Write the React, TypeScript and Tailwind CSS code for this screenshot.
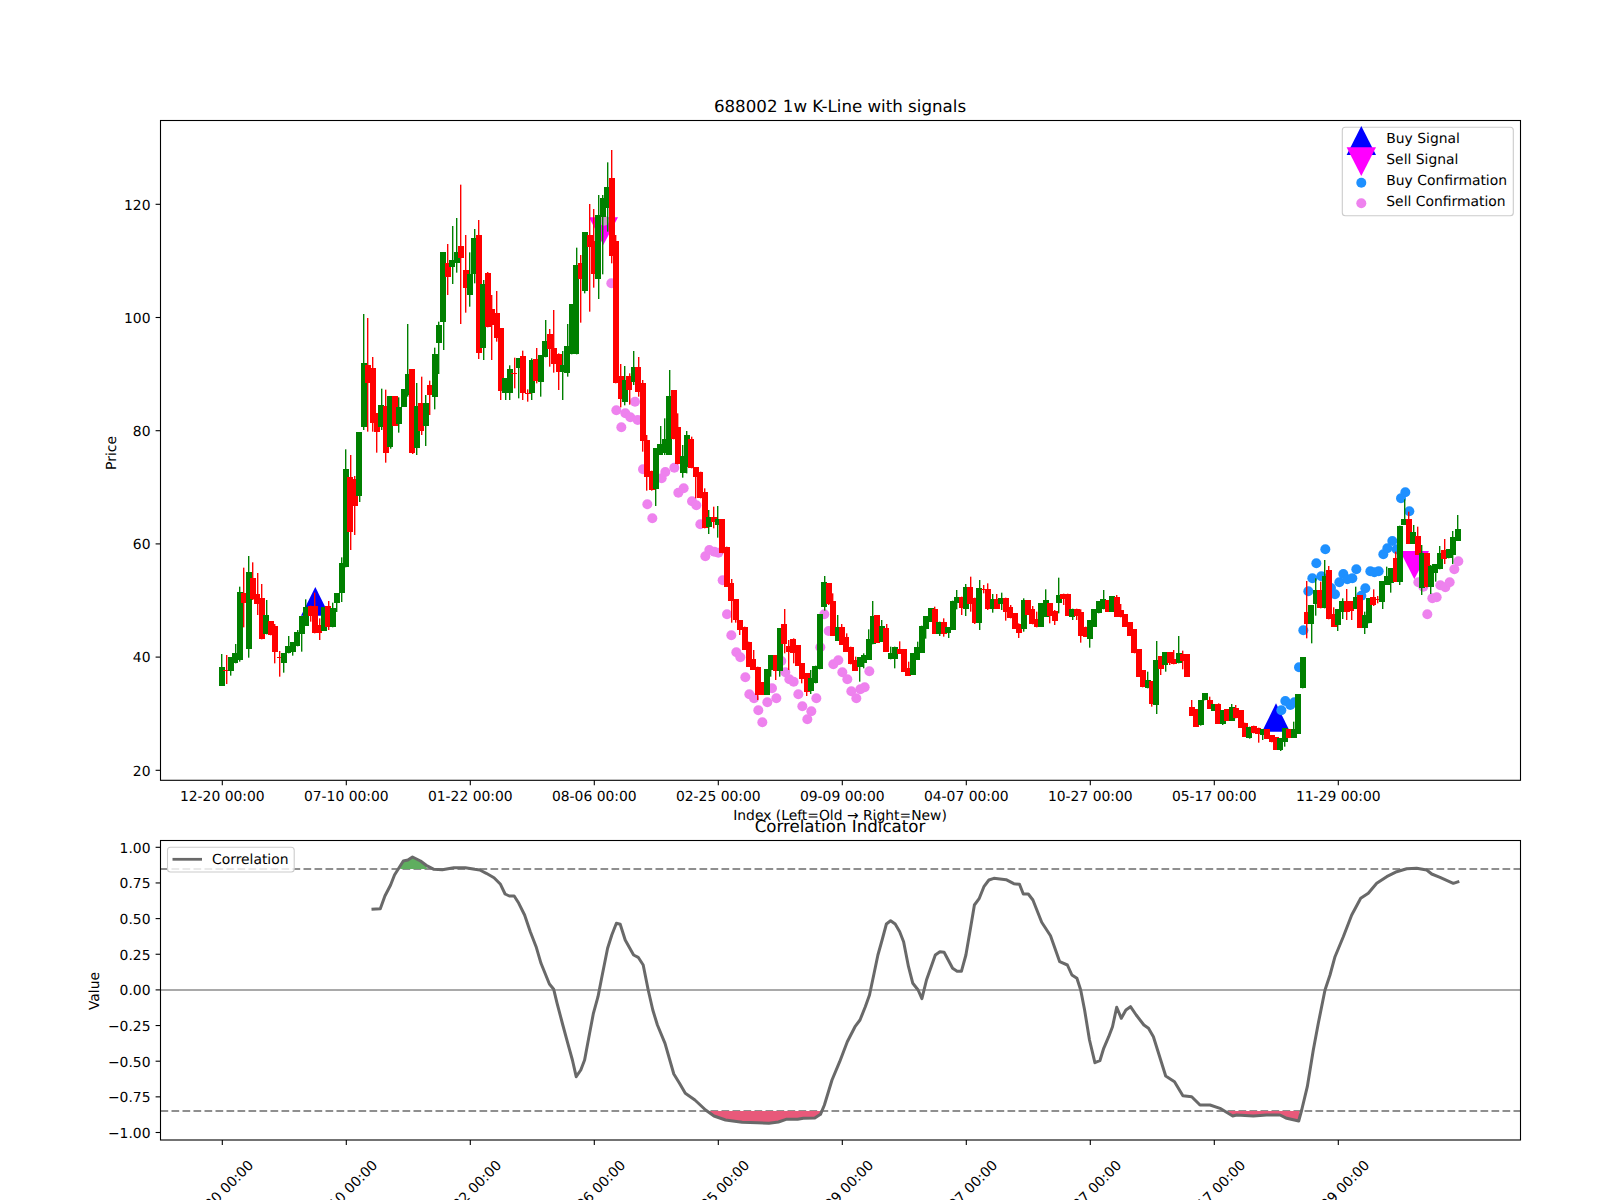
import React from "react";

type C = { g: boolean; t: number; b: number; wt: number; wb: number };
const seg = (y0: number, s: string): C[] => {
  const k = s.trim().split(/\s+/);
  const o: C[] = [];
  for (let i = 0; i + 4 < k.length; i += 5) {
    o.push({ g: k[i] === "G", t: y0 + +k[i + 1] / 3, b: y0 + +k[i + 2] / 3, wt: y0 + +k[i + 3] / 3, wb: y0 + +k[i + 4] / 3 });
  }
  return o;
};

const candles: C[] = [
  ...seg(400, `
G 802 857 762 857  R 810 813 765 852  G 772 812 772 827  G 760 790 732 790  G 577 780 560 785
R 580 608 503 682  G 517 748 468 773  R 535 598 487 600  R 583 612 519 645  R 595 718 552 718
G 646 703 600 703  R 663 706 663 706  R 679 756 672 790  R 770 773 753 830  G 760 790 760 818
G 739 760 708 760  G 727 757 727 767  G 697 739 690 739  G 649 703 649 755  G 622 677 598 677
R 617 647 617 665  R 617 700 578 700  R 676 700 655 720  G 622 692 622 692  R 618 682 603 690
G 625 682 608 682  G 580 608 580 636  G 490 578 472 606  G 208 502 148 502  R 232 395 165 450
R 237 317 228 405  G 97 287 97 306`),
  ...seg(100, `
G 790 981 642 990  R 796 848 654 995  R 805 970 771 995  R 940 995 940 1058  G 915 982 866 990
R 918 1060 869 1088  G 888 1040 888 1046  R 888 978 888 978  G 922 973 892 998  G 868 920 868 920
G 823 885 672 890  R 808 1058 808 1062  G 918 1045 849 1065  R 908 992 830 1005  G 908 977 885 1038
R 855 885 842 945  G 763 890 743 928  G 676 730 665 822  G 457 665 457 750  R 490 532 432 585
G 481 500 378 552  G 457 488 354 518  R 438 475 254 672  R 511 563 405 638  G 523 586 457 620
G 414 523 387 550  R 406 760 360 777  G 553 743 540 780  R 520 682 516 682  R 628 675 585 780
R 640 715 573 725  R 685 872 685 900  G 835 880 835 900  G 808 880 796 900  R 820 822 773 865
G 775 803 775 895  R 769 880 752 900  R 880 882 868 905  G 781 880 775 900  R 778 842 744 850`),
  ...seg(130, `
G 675 755 675 800  G 633 682 570 682  R 612 658 597 710  R 655 702 540 728  R 672 725 670 780
G 706 727 663 810  G 648 730 582 740  G 522 673 522 673  G 405 673 353 673  R 400 448 375 578
G 307 482 307 490  R 316 352 222 545  R 333 433 237 473  G 256 446 195 507  G 205 262 195 433
G 172 233 97 305  R 145 377 60 400  R 333 758 315 760  R 737 808 702 832  G 750 815 708 826
R 738 780 730 824  G 712 755 663 765  R 712 787 681 800`),
  ...seg(400, `
R -50 123 -60 155  R 120 230 105 272  R 212 270 212 272  G 145 268 145 318  G 133 165 78 165
G 118 160 55 165  G -12 165 -90 165  R -30 118 -30 118  R 82 193 40 193  G 167 218 135 233
G 105 200 93 220  R 118 205 110 205  R 202 232 202 295  R 217 295 215 295  R 275 385 265 385
G 352 382 330 402  R 352 365 320 385  G 358 375 318 413  R 358 458 358 460  R 440 560 440 560
R 548 603 537 668  R 597 660 597 668  R 660 690 660 705  R 680 750 680 750  R 725 800 725 800
R 778 810 750 810  R 800 885 800 900  R 847 885 847 885  G 808 885 808 885  G 766 810 785 830
R 766 812 766 840  G 685 812 685 830  R 673 733 627 760  R 738 755 720 810  R 717 758 715 790
R 735 798 735 798  R 790 838 790 850  R 820 875 820 888  G 835 873 810 882  G 797 850 797 850
G 643 808 643 808  G 545 620 528 632  R 550 612 550 615  R 602 708 580 708  G 682 722 645 722
R 682 735 672 735  R 710 755 700 755  R 742 793 740 793  R 780 812 770 812  G 772 800 772 845
G 764 790 760 805  G 716 780 688 780  G 649 733 603 733  R 646 728 646 728  G 677 725 660 725
R 685 755 672 755  G 760 778 740 778  G 740 778 740 805  R 746 762 724 762  R 748 815 748 815
R 803 827 785 827  G 760 825 760 825  G 740 780 725 780  G 677 758 677 758  G 649 688 649 716`),
  ...seg(530, `
G 235 275 235 275  R 237 311 230 311  G 275 312 275 318  R 277 313 265 320  G 292 310 292 324
G 212 300 212 300  G 202 220 180 238  R 202 235 200 255  G 170 238 162 258  R 170 223 140 245
R 203 278 203 282  G 175 280 150 300  R 176 180 165 190  R 178 238 160 240  G 208 238 192 248
R 208 237 192 237  G 205 222 188 240  R 203 247 203 272  R 232 265 225 265  R 250 297 250 297
R 282 310 280 324  G 211 296 205 305  R 211 255 211 255  R 238 283 228 283  R 268 290 245 292
G 220 290 220 290  G 211 260 178 260  R 220 257 220 280  R 243 272 240 285  G 196 218 143 250
R 191 208 191 225  R 191 257 191 257  G 236 260 236 270  R 236 258 236 270  R 245 318 238 338
R 290 320 290 320  G 271 328 271 353  G 238 290 238 290  G 214 250 214 250  G 208 238 180 238
R 210 245 210 245  G 199 245 199 245  R 201 260 195 260  R 240 262 222 262  R 253 290 253 290
R 276 318 276 318  R 298 370 298 370  R 358 440 358 440  R 421 472 421 472  G 450 475 425 475
R 453 522 453 530  G 391 524 333 552  R 379 417 379 435  G 367 406 367 425  R 367 400 367 405
R 386 403 360 403  G 370 400 318 400  R 373 393 362 418  R 373 440 373 440  R 531 558 510 558
R 538 590 538 590  G 511 585 511 587  G 490 511 490 511  R 511 536 500 536  G 523 542 523 542
R 523 581 520 581  G 541 581 541 585  R 538 572 538 572  G 530 572 522 572  R 535 565 525 565
R 541 594 541 594  R 578 621 578 621  G 590 623 590 626  R 587 610 587 610  R 593 612 593 638
G 598 616 598 630  R 598 627 598 627  R 616 637 616 637  R 622 660 622 660  G 625 660 625 663
G 594 637 594 650  R 597 623 597 623  G 598 623 575 623  G 493 612 493 612  G 382 475 382 475`),
  ...seg(470, `
R 427 462 333 505  G 405 462 405 520  G 360 402 325 437  R 360 415 335 415  G 318 415 270 415
R 300 448 288 448  R 432 470 412 470  G 418 465 418 483  G 393 425 385 447  R 393 425 357 450
R 393 422 393 450  G 380 417 350 417  R 376 473 376 473  G 436 475 425 492  G 385 460 385 460
R 380 405 358 408  R 388 390 378 400  G 334 395 334 417  G 318 345 290 345  G 295 338 295 368
R 265 335 245 335  G 167 335 167 345  G 148 165 88 165  R 148 222 125 222  G 187 222 165 222
R 198 255 170 255  G 250 353 225 375  R 250 352 250 352  G 288 352 285 372  G 283 308 283 335
G 248 298 228 298  R 240 268 207 282  G 238 265 238 265  G 200 255 183 282  G 176 212 135 212`),
];

const xi = (i: number) => 222 + 4.4286 * i;

const pts = (ox: number, oy: number, sx: number, s: string): [number, number][] =>
  s.trim().split(/\s+/).map((p) => {
    const [a, b] = p.split(",").map(Number);
    return [ox + a / sx, oy + b / 3] as [number, number];
  });

const pink = [
  ...pts(540, 130, 3, "214,460"),
  ...pts(600, 400, 3, `49,31 64,82 76,40 91,52 105,5 113,60 129,208 142,313 157,355 185,235 196,216 223,203 235,278 251,265 276,304 289,316 301,373 316,469 328,450 343,455 355,458 368,541 381,643 394,706 409,757 421,772 436,832 448,883 462,895 475,931 487,967 502,907 516,865 529,895 544,783 556,817 568,838 581,845 595,883 607,919 622,958 634,934 649,895 661,742 673,643 686,693 700,793 715,781 727,817 742,838 754,874 769,895 781,868 794,862 808,814`),
  ...pts(1230, 470, 3, "565,337 580,350 592,433 607,385 620,382 631,346 646,352 659,337 673,298 685,274"),
];
const blue = pts(1230, 470, 3, `220,481 207,592 154,721 166,693 181,705 193,697 235,364 247,325 259,280 274,319 286,238 303,354 315,373 328,337 340,312 352,328 367,325 379,298 394,377 406,355 421,304 433,307 446,304 460,253 472,235 487,213 500,238 513,85 526,67 538,124`);

const line: [number, number][] = [
  ...pts(140, 780, 2.6133, `605,388 628,386 640,348 655,315 665,285 688,243 700,240 712,231 733,243 748,256 768,268 790,269 820,263 850,263 875,268 888,270 905,280 925,293 942,313 954,342 965,348 978,348 990,370 1005,405 1020,455 1035,500 1048,550 1070,612 1081,628 1090,670 1105,735 1118,790 1130,840 1140,890 1152,870 1162,840 1175,760 1185,700 1197,650 1207,590 1222,505 1233,465 1245,430 1255,433 1268,480 1290,525 1302,532 1315,555 1328,630 1340,690 1352,735 1372,790 1395,882 1410,910 1425,940 1450,960 1478,990 1500,1008 1530,1020`),
  ...pts(700, 780, 2.6133, `110,1027 150,1028 180,1030 205,1026 225,1018 255,1018 270,1015 300,1014 315,1003 325,975 345,900 365,845 385,785 405,740 418,720 432,680 443,645 455,580 465,525 476,480 487,432 498,422 510,432 522,455 532,485 545,560 556,610 570,630 580,656 592,600 615,525 627,515 638,517 660,565 672,574 683,574 695,525 707,445 717,375 730,355 742,320 755,300 768,295 800,299 820,311 835,313 845,342 858,342 870,360 893,427 916,467 940,545 960,555 972,585 985,595 995,630 1005,690 1018,780 1032,848 1045,842 1055,805 1068,770 1078,740 1089,682 1101,715 1113,690 1125,680 1140,705 1160,735 1172,745 1185,770 1217,888 1240,905 1262,947 1285,950`),
  ...pts(1200, 800, 3, `0,915 30,915 60,925 98,948 110,945 160,948 200,945 240,945 260,955 296,963 305,930 322,860 340,750 355,670 375,570 390,525 405,470 430,410 455,345 482,295 505,280 530,250 560,230 590,215 620,206 650,205 680,210 695,222 720,232 760,250 778,244`),
];
const lineD = line.map((p, i) => `${i ? "L" : "M"}${p[0].toFixed(1)} ${p[1].toFixed(1)}`).join(" ");

const between = (a: number, b: number, y: number, extra: [number, number]) => {
  const inner = line.filter((p) => p[0] > a && p[0] < b);
  return [[a, y], ...inner, extra, [extra[0], y]].map((p) => p.join(",")).join(" ");
};

const dates = ["12-20 00:00", "07-10 00:00", "01-22 00:00", "08-06 00:00", "02-25 00:00", "09-09 00:00", "04-07 00:00", "10-27 00:00", "05-17 00:00", "11-29 00:00"];
const ticks = dates.map((_, i) => 222.3 + 124 * i);
const priceTicks = [120, 100, 80, 60, 40, 20];
const corrTicks = ["1.00", "0.75", "0.50", "0.25", "0.00", "−0.25", "−0.50", "−0.75", "−1.00"];

export default function App() {
  return (
    <div className="w-[1600px] h-[1200px] bg-white overflow-hidden">
      <svg width={1600} height={1200} viewBox="0 0 1600 1200" textRendering="geometricPrecision" className="block font-['DejaVu_Sans',sans-serif] text-[13.89px]" fill="#000">
        <text x={840} y={112} textAnchor="middle" className="text-[16.67px]">688002 1w K-Line with signals</text>

        {/* price panel marks */}
        <polygon points="315.3,587 301,615.7 329.6,615.7" fill="#0000ff" />
        <polygon points="603.3,245 589,217.3 618,217.3" fill="#ff00ff" />
        <polygon points="1276,703.3 1262,731.7 1290,731.7" fill="#0000ff" />
        <polygon points="1414.3,579.3 1400,551 1429,551" fill="#ff00ff" />
        {pink.map((p, i) => <circle key={i} cx={p[0]} cy={p[1]} r={5} fill="#ee82ee" />)}
        {blue.map((p, i) => <circle key={i} cx={p[0]} cy={p[1]} r={5} fill="#1e90ff" />)}
        <circle cx={604} cy={220.7} r={5} fill="#cc99cc" />
        {candles.map((c, i) => {
          const col = c.g ? "#008000" : "#ff0000";
          const x = xi(i);
          return (
            <g key={i} fill={col} stroke="none">
              <rect x={Math.round(x - 0.7)} y={c.wt} width={1.39} height={Math.max(c.wb - c.wt, 0)} />
              <rect x={Math.round(x - 3)} y={Math.round(c.t)} width={6} height={Math.max(Math.round(c.b) - Math.round(c.t), 1)} />
            </g>
          );
        })}

        <rect x={160.5} y={120.5} width={1360} height={659.8} fill="none" stroke="#000" strokeWidth={1.1} />
        {priceTicks.map((v) => {
          const y = 204.3 + (120 - v) * 5.66;
          return (
            <g key={v}>
              <line x1={155.6} x2={160.5} y1={y} y2={y} stroke="#000" strokeWidth={1.1} />
              <text x={150.5} y={y + 5.3} textAnchor="end">{v}</text>
            </g>
          );
        })}
        {ticks.map((x, i) => (
          <g key={i}>
            <line x1={x} x2={x} y1={780.3} y2={785.2} stroke="#000" strokeWidth={1.1} />
            <text x={x} y={801} textAnchor="middle">{dates[i]}</text>
          </g>
        ))}
        <text transform="translate(116,453) rotate(-90)" textAnchor="middle">Price</text>
        <text x={840} y={820} textAnchor="middle">Index (Left=Old → Right=New)</text>

        {/* legend of the price panel */}
        <rect x={1342.3} y={127.3} width={171} height={88.4} rx={3} fill="#fff" fillOpacity={0.8} stroke="#cccccc" strokeWidth={1.1} />
        <polygon points="1361.3,126 1346.6,155 1376,155" fill="#0000ff" />
        <polygon points="1361.3,176 1346.6,147.3 1376,147.3" fill="#ff00ff" />
        <circle cx={1361.3} cy={182.7} r={5} fill="#1e90ff" />
        <circle cx={1361.3} cy={203.3} r={5} fill="#ee82ee" />
        <text x={1386.3} y={142.8}>Buy Signal</text>
        <text x={1386.3} y={163.8}>Sell Signal</text>
        <text x={1386.3} y={184.8}>Buy Confirmation</text>
        <text x={1386.3} y={205.8}>Sell Confirmation</text>

        <text x={840} y={832} textAnchor="middle" className="text-[16.67px]">Correlation Indicator</text>

        {/* correlation panel */}
        <line x1={160.5} x2={1520.5} y1={990} y2={990} stroke="#a9a9a9" strokeWidth={2.08} />
        <line x1={160.5} x2={1520.5} y1={869} y2={869} stroke="#8f8f8f" strokeWidth={2.2} strokeDasharray="7.7 3.3" />
        <line x1={160.5} x2={1520.5} y1={1111} y2={1111} stroke="#8f8f8f" strokeWidth={2.2} strokeDasharray="7.7 3.3" />
        <polygon points={between(400, 427, 869, [427, 869])} fill="#5fae5f" />
        <polygon points={between(708, 821, 1111, [821, 1112])} fill="#e8597a" />
        <polygon points={between(1228, 1299.5, 1111, [1299.5, 1121])} fill="#e8597a" />
        <path d={lineD} fill="none" stroke="#696969" strokeWidth={3} strokeLinejoin="round" />
        <rect x={160.5} y={840.5} width={1360} height={299.5} fill="none" stroke="#000" strokeWidth={1.1} />
        {corrTicks.map((t, i) => {
          const y = 847.3 + i * 35.65;
          return (
            <g key={t}>
              <line x1={155.6} x2={160.5} y1={y} y2={y} stroke="#000" strokeWidth={1.1} />
              <text x={150.5} y={y + 5.3} textAnchor="end">{t}</text>
            </g>
          );
        })}
        {ticks.map((x, i) => (
          <g key={i}>
            <line x1={x} x2={x} y1={1140} y2={1145} stroke="#000" strokeWidth={1.1} />
            <text transform={`translate(${x - 1.5},1192.5) rotate(-45)`} y={5} textAnchor="middle">{dates[i]}</text>
          </g>
        ))}
        <text transform="translate(99,991) rotate(-90)" textAnchor="middle">Value</text>

        <rect x={167.5} y={847.3} width={126.7} height={24.7} rx={3} fill="#fff" fillOpacity={0.8} stroke="#cccccc" strokeWidth={1.1} />
        <line x1={172.5} x2={202} y1={859.3} y2={859.3} stroke="#696969" strokeWidth={2.78} />
        <text x={212} y={863.8}>Correlation</text>
      </svg>
    </div>
  );
}
